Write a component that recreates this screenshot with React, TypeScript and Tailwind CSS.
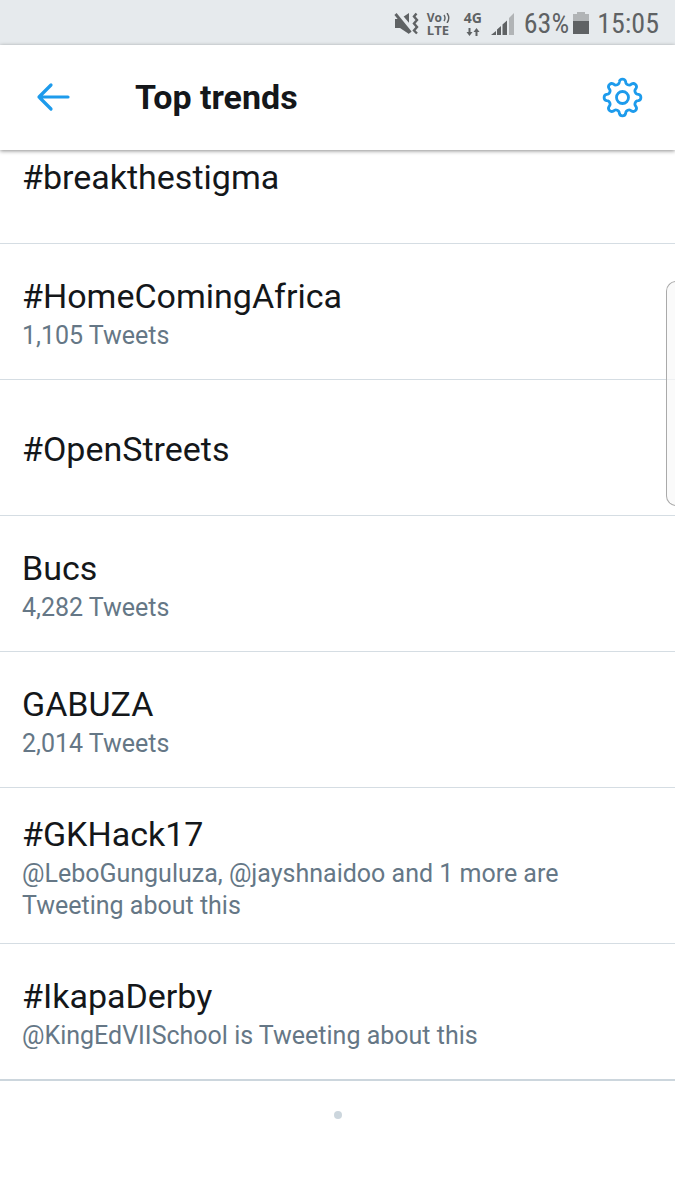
type Trend = { name: string; detail?: string };

const trends: Trend[] = [
  { name: "#breakthestigma" },
  { name: "#HomeComingAfrica", detail: "1,105 Tweets" },
  { name: "#OpenStreets" },
  { name: "Bucs", detail: "4,282 Tweets" },
  { name: "GABUZA", detail: "2,014 Tweets" },
  {
    name: "#GKHack17",
    detail: "@LeboGunguluza, @jayshnaidoo and 1 more are Tweeting about this",
  },
  { name: "#IkapaDerby", detail: "@KingEdVIISchool is Tweeting about this" },
];

// Eight rounded teeth: arcs that bulge outward and inward in turn.
function gearPath(center: number, radius: number) {
  const step = Math.PI / 8;
  const points = Array.from({ length: 17 }, (_, i) => {
    const angle = -Math.PI / 2 - step / 2 + i * step;
    const x = (center + radius * Math.cos(angle)).toFixed(2);
    const y = (center + radius * Math.sin(angle)).toFixed(2);
    return `${x} ${y}`;
  });
  return points
    .map((p, i) => {
      if (i === 0) return `M${p}`;
      return i % 2 === 1 ? `A3.25 3.25 0 0 1 ${p}` : `A3.4 3.4 0 0 0 ${p}`;
    })
    .join("");
}

function StatusBar() {
  return (
    <div className="flex h-[45px] items-center justify-end bg-[#e6eaed] pt-[2px] pr-4 text-[#5f6264]">
      <svg className="mr-2" width="25" height="26" viewBox="0 0 25 26" aria-label="Vibrate">
        <path d="M1 8h5l9-6v21l-9-6H1z" fill="currentColor" />
        <path d="M2 0L19 20" stroke="#e6eaed" strokeWidth="4.500" />
        <path d="M1.500 3L16.500 21.500" stroke="currentColor" strokeWidth="2.800" />
        <path
          d="M22.500 2.500L20 5.500l3 3.500-3 3.500 3 3.500-3 3.500 3 3"
          fill="none"
          stroke="currentColor"
          strokeWidth="2.400"
        />
      </svg>
      <div className="mr-3 flex w-6 flex-col font-['Open_Sans',sans-serif] font-bold">
        <span className="flex items-center text-[12px] leading-3">
          Vo
          <svg className="ml-px" width="7" height="10" viewBox="0 0 7 10" aria-hidden="true">
            <path d="M1 2q2 3 0 6M4 0q3.500 5 0 10" fill="none" stroke="currentColor" strokeWidth="1.400" />
          </svg>
        </span>
        <span className="text-[13px] leading-3">LTE</span>
      </div>
      <div className="mr-2 flex w-5 flex-col items-center font-['Open_Sans',sans-serif] font-bold">
        <span className="text-[14px] leading-3">4G</span>
        <svg className="mt-1" width="14" height="8" viewBox="0 0 14 8" aria-hidden="true">
          <path d="M2.500 0h2v4h2L3.500 8l-3-4h2zM9.500 8h2V4h2l-3-4-3 4h2z" fill="currentColor" />
        </svg>
      </div>
      <svg className="mr-2" width="25" height="24" viewBox="0 0 25 24" aria-label="Signal">
        <path d="M0 23l5-4v4zM6 17.500l4-3.500v9H6zM11.500 12.500l4.500-4v14.500h-4.500z" fill="currentColor" />
        <path d="M18 6l5-5v22h-5z" fill="#b1b4b6" />
      </svg>
      <span className="mr-1 font-['Roboto_Condensed',Roboto,sans-serif] text-[28px] leading-8">63%</span>
      <svg className="mr-2" width="16" height="24" viewBox="0 0 16 24" aria-label="Battery">
        <path d="M0 2h4V0h8v2h4v8H0z" fill="#b1b4b6" />
        <path d="M0 9h16v13H0z" fill="currentColor" />
      </svg>
      <time className="font-['Roboto_Condensed',Roboto,sans-serif] text-[28px] leading-8">15:05</time>
    </div>
  );
}

function Header() {
  return (
    <header className="relative z-10 flex h-[105px] items-center bg-white px-8 pb-[2px] shadow-[0_1px_4px_rgba(0,0,0,0.45)]">
      <button type="button" aria-label="Back" className="flex w-[103px] items-center pl-1">
        <svg width="36" height="30" viewBox="0 0 36 30">
          <path
            d="M32 15H3M15 3L3 15l12 12"
            fill="none"
            stroke="#1d9bec"
            strokeWidth="3.200"
            strokeLinecap="round"
            strokeLinejoin="round"
          />
        </svg>
      </button>
      <h1 className="flex-1 text-[34px] leading-10 font-bold">Top trends</h1>
      <button type="button" aria-label="Trend settings">
        <svg width="42" height="42" viewBox="0 0 42 42" fill="none" stroke="#1d9bec" strokeWidth="2.800">
          <path d={gearPath(21.5, 16.2)} strokeLinejoin="round" />
          <circle cx="21.500" cy="21.500" r="6" />
        </svg>
      </button>
    </header>
  );
}

export default function App() {
  return (
    <div className="relative min-h-screen overflow-hidden bg-white font-[Roboto,sans-serif] text-[#14171a]">
      <StatusBar />
      <Header />
      <main className="-mt-[42px]">
        <ul>
          {trends.map((trend) => (
            <li key={trend.name} className="border-b border-[#d5dde3] last:border-b-2 last:border-[#ccd6dd]">
              <a href="#trend" className="flex min-h-[135px] flex-col justify-center px-[22px] pt-6 pb-[21px]">
                <span className="text-[34px] leading-[44px]">{trend.name}</span>
                {trend.detail && (
                  <span className="mt-[2px] max-w-[560px] text-[25px] leading-8 text-[#657786]">{trend.detail}</span>
                )}
              </a>
            </li>
          ))}
        </ul>
        <div className="mx-auto mt-[30px] size-2 rounded-full bg-[#ccd6dd]" />
      </main>
      <div className="absolute top-[281px] -right-px h-[225px] w-[10px] rounded-l-[10px] border border-r-0 border-[#aaaaaa] bg-[#f8f8f8]/70" />
    </div>
  );
}
